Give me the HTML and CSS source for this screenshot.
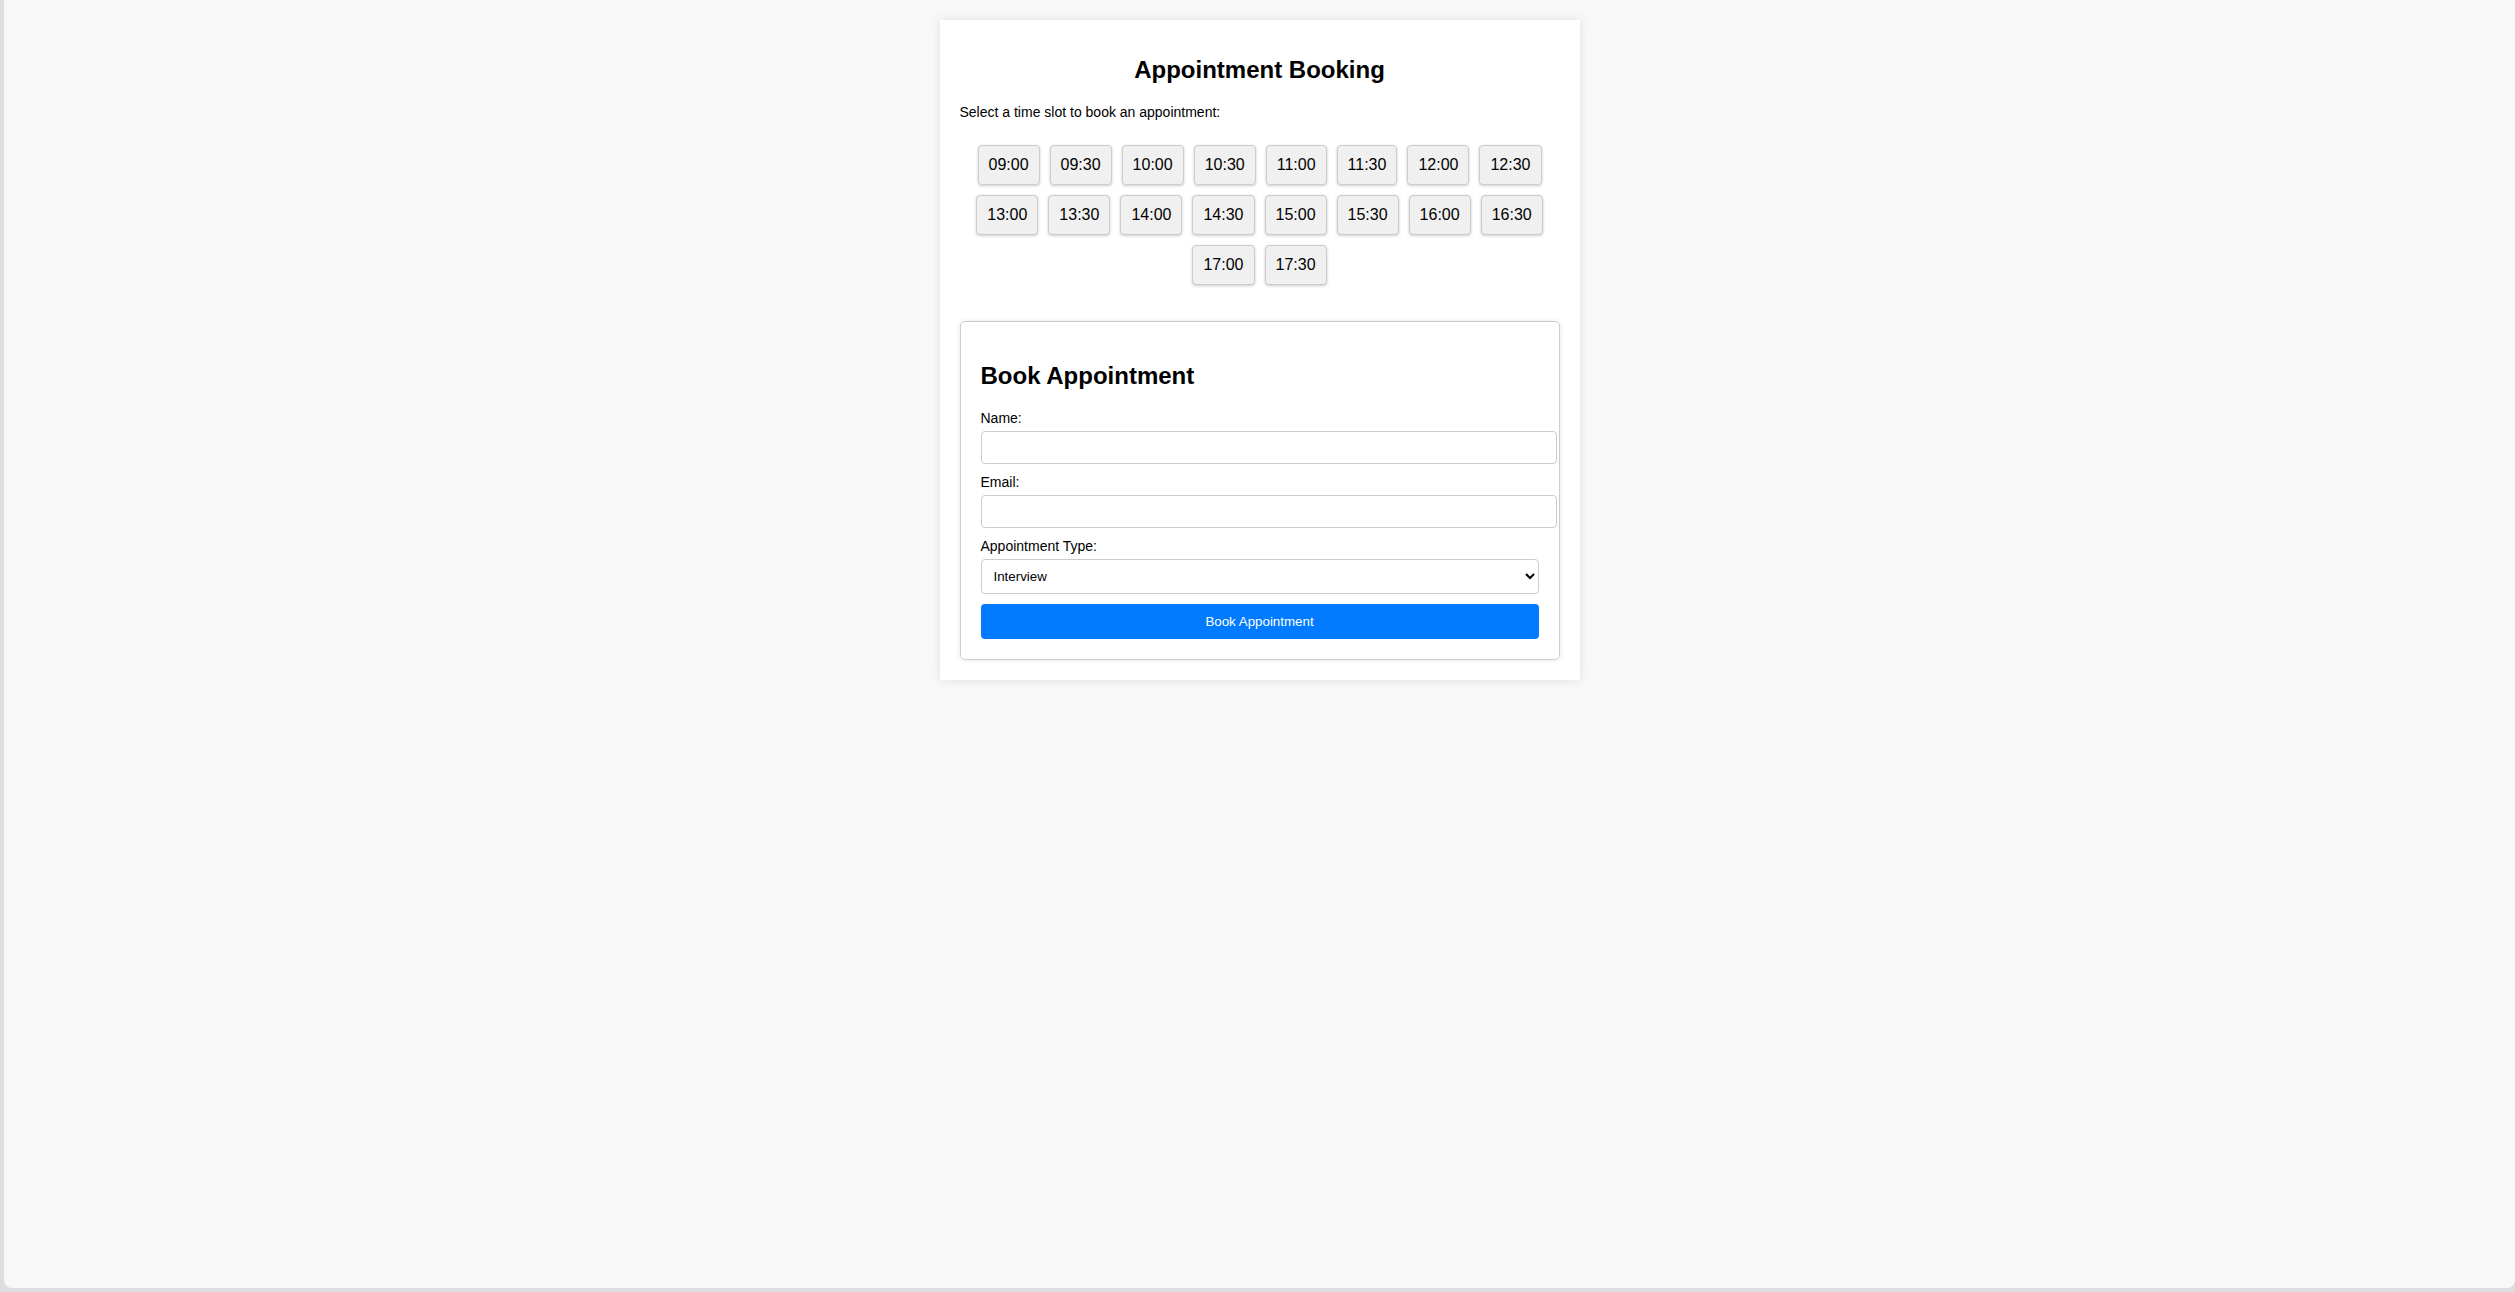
FILE: index.html
```html
<!DOCTYPE html>
<html lang="en">

<head>
    <meta charset="UTF-8">
    <meta name="viewport" content="width=device-width, initial-scale=1.0">
    <title>Appointment Booking</title>
    <link rel="stylesheet" href="styles.css">
</head>

<body>
    <div class="container">
        <h2 class="title">Appointment Booking</h2>
        <p class="intro">Select a time slot to book an appointment:</p>

        <!-- time slots -->
        <div class="slots">
            <button class="slot">09:00</button>
            <button class="slot">09:30</button>
            <button class="slot">10:00</button>
            <button class="slot">10:30</button>
            <button class="slot">11:00</button>
            <button class="slot">11:30</button>
            <button class="slot">12:00</button>
            <button class="slot">12:30</button>
            <button class="slot">13:00</button>
            <button class="slot">13:30</button>
            <button class="slot">14:00</button>
            <button class="slot">14:30</button>
            <button class="slot">15:00</button>
            <button class="slot">15:30</button>
            <button class="slot">16:00</button>
            <button class="slot">16:30</button>
            <button class="slot">17:00</button>
            <button class="slot">17:30</button>
        </div>

        <!-- booking form -->
        <div class="booking-form">
            <h2>Book Appointment</h2>
            <label for="name">Name:</label>
            <input id="name" type="text">
            <label for="email">Email:</label>
            <input id="email" type="email">
            <label for="type">Appointment Type:</label>
            <select id="type">
                <option>Interview</option>
                <option>Consultation</option>
                <option>Meeting</option>
            </select>
            <button class="submit">Book Appointment</button>
        </div>
    </div>
</body>

</html>
```

FILE: styles.css
```css
html {
    background-color: #dcdee2;
}

body {
    font-family: "Liberation Sans", Arial, sans-serif;
    font-size: 14px;
    background-color: #f8f8f8;
    margin: 0 0 4px 4px;
    padding: 20px;
    min-height: calc(100vh - 44px);
    border-radius: 0 0 8px 8px;
}

.container {
    max-width: 600px;
    margin: 0 auto;
    padding: 20px;
    background-color: #fff;
    box-shadow: 0 0 10px rgba(0, 0, 0, 0.1);
}

.title {
    font-size: 24px;
    text-align: center;
    margin: 16px 0 20px;
}

.intro {
    margin: 0;
}

.slots {
    display: flex;
    flex-wrap: wrap;
    justify-content: center;
    margin: 20px 0 31px;
}

.slot {
    font-family: "Liberation Sans", Arial, sans-serif;
    font-size: 16px;
    color: #000;
    padding: 10px;
    margin: 5px;
    background-color: #f0f0f0;
    border: 1px solid #ccc;
    border-radius: 4px;
    box-shadow: 0 1px 3px rgba(0, 0, 0, 0.2);
    cursor: pointer;
}

.booking-form {
    padding: 20px;
    border: 1px solid #ccc;
    border-radius: 5px;
    box-shadow: 0 0 5px rgba(0, 0, 0, 0.1);
}

.booking-form h2 {
    font-size: 24px;
    margin: 20px 0;
}

.booking-form label {
    display: block;
    margin-bottom: 5px;
}

.booking-form input {
    width: 100%;
    padding: 8px;
    margin-bottom: 10px;
    font-family: "Liberation Sans", Arial, sans-serif;
    font-size: 13.33px;
    border: 1px solid #ccc;
    border-radius: 4px;
}

.booking-form select {
    width: 100%;
    padding: 8px;
    margin-bottom: 10px;
    font-family: "Liberation Sans", Arial, sans-serif;
    font-size: 13.33px;
    color: #000;
    background-color: #fff;
    border: 1px solid #ccc;
    border-radius: 4px;
}

.submit {
    display: block;
    width: 100%;
    padding: 10px;
    font-family: "Liberation Sans", Arial, sans-serif;
    font-size: 13.33px;
    color: #fff;
    background-color: #007bff;
    border: none;
    border-radius: 4px;
    cursor: pointer;
}
```
